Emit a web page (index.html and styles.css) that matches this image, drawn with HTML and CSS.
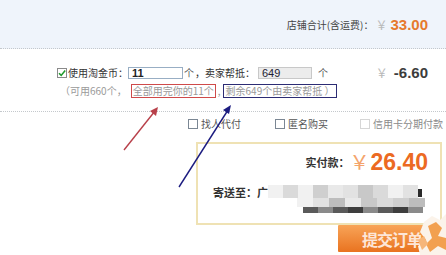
FILE: index.html
```html
<!DOCTYPE html>
<html lang="zh-CN">
<head>
<meta charset="utf-8">
<title>订单确认</title>
<link rel="stylesheet" href="styles.css">
</head>
<body>
<div class="page">
  <div class="shop-total">
    <span class="label">店铺合计(含运费)：</span>
    <span class="yen">￥</span><span class="amount">33.00</span>
  </div>

  <div class="coins">
    <div class="coin-row">
      <span class="check checked">
        <svg viewBox="0 0 10 10" width="10" height="10"><path d="M2 5.2 L4.2 7.4 L8.2 2.6" fill="none" stroke="#1f9a2c" stroke-width="1.6"/></svg>
      </span>
      <span class="label">使用淘金币：</span>
      <input class="field" type="text" value="11">
      <span class="unit">个</span>
      <span class="label">，卖家帮抵：</span>
      <input class="field disabled" type="text" value="649" disabled>
      <span class="unit unit-far">个</span>
      <span class="discount"><span class="yen">￥</span><span class="amount dark">-6.60</span></span>
    </div>
    <div class="coin-note">
      <span>（可用660个，</span><span class="box-red">全部用完你的11个</span><span class="sep">,</span><span class="box-blue">剩余649个由卖家帮抵 ）</span>
    </div>
  </div>

  <div class="options">
    <label class="opt"><span class="check"></span>找人代付</label>
    <label class="opt"><span class="check"></span>匿名购买</label>
    <label class="opt off"><span class="check"></span>信用卡分期付款</label>
  </div>

  <div class="paybox">
    <div class="pay-row">
      <span class="pay-label">实付款：</span><span class="pay-yen">￥</span><span class="pay-amount">26.40</span>
    </div>
    <div class="addr-row">
      <span class="addr-label">寄送至：广</span>
      <div class="mosaic">
        <div class="mrow r1">
          <i class="c3"></i><i class="c2"></i><i class="c3"></i><i class="c4"></i><i class="c1"></i><i class="c5"></i><i class="c6"></i><i class="c2"></i><i class="c3"></i><i class="c5"></i><i class="dot"></i>
        </div>
        <div class="mrow r2">
          <i class="c3"></i><i class="c5"></i><i class="c7"></i><i class="c1"></i><i class="c6"></i><i class="c2"></i><i class="c4"></i><i class="c7"></i>
        </div>
        <div class="mrow r3">
          <i class="d1"></i><i class="d2"></i><i class="d1"></i><i class="d3"></i><i class="d2"></i><i class="d1"></i><i class="d3"></i><i class="d2"></i>
        </div>
      </div>
    </div>
  </div>

  <div class="submit-row">
    <button class="submit" type="button">提交订单</button>
  </div>

  <svg class="overlay" width="446" height="255" viewBox="0 0 446 255">
    <line x1="124" y1="150" x2="155" y2="111" stroke="#b8404a" stroke-width="1.4"/>
    <polygon points="158,107 150,111 156,116" fill="#b8404a"/>
    <line x1="179" y1="187" x2="228" y2="110" stroke="#1c1c80" stroke-width="1.4"/>
    <polygon points="231,105 223,110 229,114" fill="#1c1c80"/>
    <path d="M424 222 L432 216 L440 220 L446 214 L446 255 L420 255 L418 246 L426 240 L420 232 Z" fill="#fbf3ea"/>
    <path d="M428 226 L436 222 L442 228 L438 236 L446 238 L446 250 L438 246 L430 252 L426 244 L432 238 Z" fill="#f2a050"/>
    <path d="M418 240 L424 236 L428 244 L422 250 Z" fill="#f6b67a"/>
  </svg>
</div>
</body>
</html>
```

FILE: styles.css
```css
* {
  box-sizing: border-box;
  margin: 0;
  padding: 0;
}

body {
  width: 446px;
  height: 255px;
  overflow: hidden;
  background: #fff;
  font-family: "Noto Sans CJK SC", sans-serif;
  font-size: 10px;
  line-height: 12px;
  color: #333;
}

.page {
  position: relative;
  width: 446px;
  height: 255px;
}

/* shop total band */
.shop-total {
  height: 49px;
  background: #eff4fb;
  border-bottom: 1px dotted #c4c8cc;
  display: flex;
  align-items: center;
  justify-content: flex-end;
  padding: 2px 18px 0 0;
}

.shop-total .label {
  color: #444;
  margin-right: 2px;
}

.yen {
  font-family: "Noto Sans CJK SC", sans-serif;
  font-size: 12px;
  color: #b9b9b9;
  margin-right: 3px;
}

.amount {
  font-family: "Liberation Sans", Arial, sans-serif;
  font-weight: bold;
  font-size: 15px;
  color: #e67a2e;
}

.amount.dark {
  color: #3c3c3c;
}

/* coins */
.coins {
  padding: 18px 18px 13px 0;
  border-bottom: 1px dotted #c4c8cc;
}

.coin-row {
  display: flex;
  align-items: center;
  height: 12px;
  padding-left: 57px;
  white-space: nowrap;
}

.check {
  display: inline-block;
  width: 10px;
  height: 10px;
  border: 1px solid #7b8794;
  background: #fff;
  flex: none;
}

.check svg {
  display: block;
  margin: -1px;
}

.check.checked {
  border-color: #8a8a8a;
}

.coin-row .label {
  margin-left: 1px;
  color: #333;
}

.field {
  width: 55px;
  height: 12px;
  border: 1px solid #98aec4;
  background: #fff;
  padding: 0 3px;
  font-family: "Liberation Sans", Arial, sans-serif;
  font-size: 11px;
  font-weight: bold;
  line-height: 10px;
  color: #222;
  outline: none;
}

.field.disabled {
  width: 54px;
  margin-left: 3px;
  background: #ececec;
  border-color: #c8c8c8;
  font-weight: normal;
  color: #223;
}

.unit {
  margin-left: 1px;
  color: #555;
}

.unit-far {
  margin-left: 6px;
}

.discount {
  margin-left: auto;
  display: flex;
  align-items: center;
}

.discount .yen {
  margin-right: 6px;
}

.coin-note {
  display: flex;
  align-items: center;
  height: 14px;
  margin-top: 5px;
  padding-left: 60px;
  color: #9a9a9a;
  white-space: nowrap;
}

.box-red {
  margin-left: 4px;
  border: 1px solid #cf4a4a;
  padding: 0 1px;
  line-height: 12px;
}

.sep {
  padding: 0 2px;
}

.box-blue {
  border: 1px solid #2c2c74;
  padding: 0 2px;
  line-height: 12px;
}

/* options */
.options {
  display: flex;
  align-items: center;
  height: 10px;
  margin-top: 7px;
  padding-left: 188px;
  color: #555;
  white-space: nowrap;
}

.opt {
  display: flex;
  align-items: center;
  gap: 3px;
  flex: none;
  margin-right: 34px;
}

.opt:nth-child(2) {
  margin-right: 32px;
}

.opt.off {
  color: #8a8a8a;
  margin-right: 0;
}

.opt.off .check {
  border-color: #d6d6d6;
}

/* pay box */
.paybox {
  margin: 13px 0 0 196px;
  width: 246px;
  height: 83px;
  border: 2px solid #efe2b4;
  background: #fff;
  padding: 6px 12px 0 15px;
}

.pay-row {
  display: flex;
  justify-content: flex-end;
  align-items: center;
  height: 24px;
}

.pay-label {
  font-size: 11px;
  font-weight: bold;
  color: #333;
}

.pay-yen {
  font-size: 20px;
  line-height: 24px;
  color: #f4a46c;
  margin-right: 1px;
}

.pay-amount {
  font-family: "Liberation Sans", Arial, sans-serif;
  font-weight: bold;
  font-size: 23px;
  line-height: 24px;
  color: #ec6a22;
}

.addr-row {
  display: flex;
  align-items: flex-start;
  margin-top: 11px;
}

.addr-label {
  font-size: 11px;
  font-weight: bold;
  line-height: 14px;
  color: #333;
  white-space: nowrap;
  flex: none;
}

.mosaic {
  display: flex;
  flex-direction: column;
  width: 162px;
}

.mrow {
  display: flex;
}

.mrow i {
  display: block;
  width: 15px;
}

.r1 i { height: 13px; }
.r2 { margin-left: 29px; }
.r2 i { height: 9px; width: 16px; }
.r3 { margin-left: 35px; }
.r3 i { height: 6px; width: 15px; }

.mrow .dot {
  width: 4px;
  height: 8px;
  margin-top: 4px;
  background: #2a2a2a;
}

.c1 { background: #e9e9e9; }
.c2 { background: #dadada; }
.c3 { background: #f1f1f1; }
.c4 { background: #cfcfcf; }
.c5 { background: #e2e2e2; }
.c6 { background: #c8c8c8; }
.c7 { background: #bdbdbd; }
.d1 { background: #5a5a5a; }
.d2 { background: #8a8a8a; }
.d3 { background: #3e3e3e; }

/* submit */
.submit-row {
  padding-left: 338px;
}

.submit {
  display: block;
  width: 99px;
  height: 27px;
  border: none;
  border-radius: 1px;
  background: linear-gradient(#f8a458, #e97320);
  color: #fde6d8;
  font-family: "Noto Sans CJK SC", sans-serif;
  font-size: 16px;
  font-weight: bold;
  text-align: left;
  padding-left: 24px;
  letter-spacing: -1px;
  white-space: nowrap;
}

.overlay {
  position: absolute;
  left: 0;
  top: 0;
  pointer-events: none;
}
```
